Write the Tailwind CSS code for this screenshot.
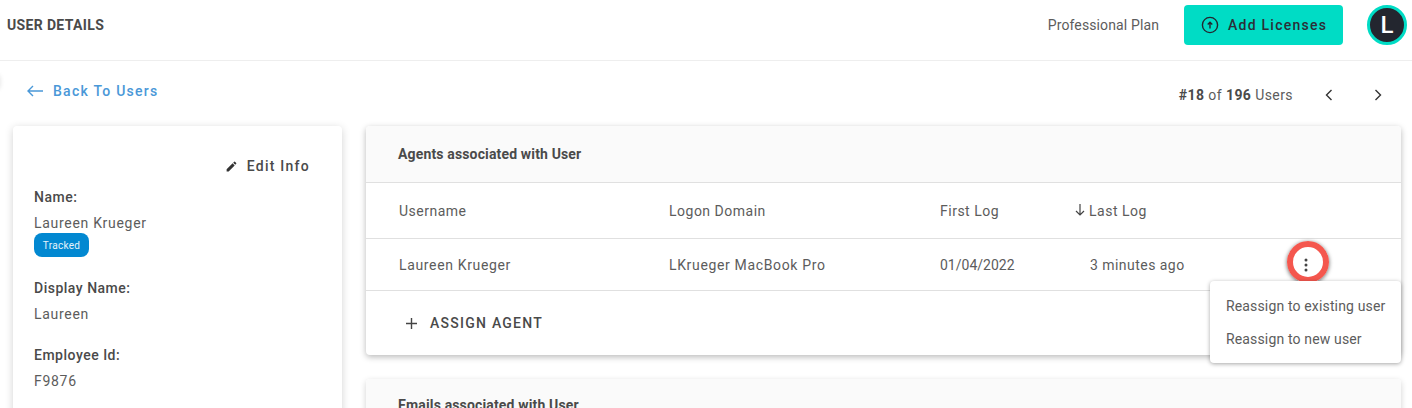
<!DOCTYPE html>
<html>
<head>
<meta charset="utf-8">
<script src="https://cdn.jsdelivr.net/npm/@tailwindcss/browser@4"></script>
</head>
<body class="bg-white overflow-hidden font-['Roboto',sans-serif] text-[#424242]">
<div class="relative w-[1412px] h-[408px] overflow-hidden">
  <!-- Top bar -->
  <div class="flex items-center h-[61px] border-b border-[#eeeeee] pb-[10px] pl-[7px] pr-[5px]">
    <h1 class="text-[14px] font-bold tracking-[0.35px] text-[#4a4a4a] grow">USER DETAILS</h1>
    <span class="text-[14px] tracking-[0.12px] text-[#5c5c5c] mr-[25px]">Professional Plan</span>
    <button class="flex items-center w-[159px] h-[40px] bg-[#00dcc5] rounded-[4px] pl-[17px] text-[14px] font-medium tracking-[1.25px] text-[#2b2e37] mr-[24px]">
      <svg class="w-[18px] h-[18px] mr-[9px]" viewBox="0 0 18 18" fill="none" stroke="#23262f" stroke-width="1.4"><circle cx="9" cy="9" r="7.6"/><path d="M9 12.5V6.5M6.7 8.6 9 6.3l2.3 2.3"/></svg>
      Add Licenses
    </button>
    <div class="flex items-center justify-center w-[40px] h-[40px] rounded-full bg-[#23262f] border-[3px] border-[#00dcc5] text-white text-[24px] font-medium">L</div>
  </div>

  <!-- Back link and pager -->
  <div class="flex items-center justify-between h-[56px] pl-[27px] pr-[29px]">
    <a class="flex items-center text-[14px] font-medium tracking-[1.25px] text-[#4a98d8] mt-[4px]">
      <svg class="w-[16px] h-[12px] mr-[10px]" viewBox="0 0 16 12" fill="none" stroke="#4a98d8" stroke-width="1.4"><path d="M16 6H1M6 1 1 6l5 5"/></svg>
      Back To Users
    </a>
    <div class="flex items-center text-[14px] tracking-[0.42px] text-[#5c5c5c] mt-[12px]">
      <span><b class="font-bold text-[#4a4a4a]">#18</b> of <b class="font-bold text-[#4a4a4a]">196</b> Users</span>
      <svg class="w-[10px] h-[12px] ml-[31px]" viewBox="0 0 10 12" fill="none" stroke="#333" stroke-width="1.4"><path d="M7.5 1 2.5 6l5 5"/></svg>
      <svg class="w-[10px] h-[12px] ml-[39px]" viewBox="0 0 10 12" fill="none" stroke="#333" stroke-width="1.4"><path d="M2.5 1l5 5-5 5"/></svg>
    </div>
  </div>

  <!-- faint edge of something cut off at the left of the page -->
  <div class="absolute -left-[10px] top-[74px] w-[10px] h-[16px] rounded-full shadow-[0_0_5px_rgba(0,0,0,0.12)]"></div>

  <div class="flex items-start pl-[13px] pt-[9px] gap-[24px]">
    <!-- User info card -->
    <div class="w-[329px] h-[400px] shrink-0 bg-white rounded-[4px] shadow-[0_2px_8px_rgba(0,0,0,0.18)] px-[21px] text-[14px] leading-[20px]">
      <div class="flex items-center justify-end pt-[30px] pr-[11px] font-medium tracking-[1.25px] text-[#4a4a4a]">
        <svg class="w-[13px] h-[13px] mr-[9px]" viewBox="0 0 24 24" fill="#333"><path d="M3 17.25V21h3.75L17.81 9.94l-3.75-3.75L3 17.25zM20.71 7.04a1 1 0 0 0 0-1.41l-2.34-2.34a1 1 0 0 0-1.41 0l-1.83 1.83 3.75 3.75 1.83-1.83z"/></svg>
        Edit Info
      </div>
      <div class="mt-[11px] font-medium tracking-[0.5px] text-[#4a4a4a]">Name:</div>
      <div class="mt-[6px] tracking-[0.7px] text-[#5c5c5c]">Laureen Krueger</div>
      <span class="flex items-center justify-center w-[55px] h-[24px] pt-[1px] rounded-[8px] bg-[#0288d1] text-white/90 text-[10px] tracking-[0.3px]">Tracked</span>
      <div class="mt-[21px] font-medium tracking-[0.5px] text-[#4a4a4a]">Display Name:</div>
      <div class="mt-[6px] tracking-[0.7px] text-[#5c5c5c]">Laureen</div>
      <div class="mt-[21px] font-medium tracking-[0.5px] text-[#4a4a4a]">Employee Id:</div>
      <div class="mt-[6px] tracking-[0.7px] text-[#5c5c5c]">F9876</div>
    </div>

    <div class="w-[1035px] shrink-0">
      <!-- Agents card -->
      <div class="bg-white rounded-[4px] shadow-[0_2px_6px_rgba(0,0,0,0.28)] text-[14px]">
        <div class="flex items-center h-[57px] pl-[32px] pt-[1px] border-b border-[#e0e0e0] bg-[#fafafa] rounded-t-[4px] font-bold tracking-[0.15px] text-[#4a4a4a]">Agents associated with User</div>
        <div class="flex items-center h-[56px] pl-[33px] pt-[2px] border-b border-[#e0e0e0] tracking-[0.5px] text-[#5c5c5c]">
          <span class="w-[270px]">Username</span>
          <span class="w-[271px]">Logon Domain</span>
          <span class="w-[135px]">First Log</span>
          <span class="flex items-center">
            <svg class="w-[10px] h-[14px] mr-[4px] -mt-[3px]" viewBox="0 0 10 14" fill="none" stroke="#444" stroke-width="1.2"><path d="M5 1v11M1 8l4 4 4-4"/></svg>
            Last Log
          </span>
        </div>
        <div class="flex items-center h-[52px] pl-[33px] pt-[2px] border-b border-[#e0e0e0] tracking-[0.65px] text-[#5c5c5c]">
          <span class="w-[270px]">Laureen Krueger</span>
          <span class="w-[271px]">LKrueger MacBook Pro</span>
          <span class="w-[150px] tracking-[0px]">01/04/2022</span>
          <span class="tracking-[0.46px]">3 minutes ago</span>
        </div>
        <div class="flex items-center h-[64px] pl-[39px] font-medium tracking-[1.25px] text-[#4a4a4a]">
          <svg class="w-[13px] h-[13px] mr-[12px]" viewBox="0 0 13 13" fill="none" stroke="#444" stroke-width="1.4"><path d="M6.5 1v11M1 6.5h11"/></svg>
          ASSIGN AGENT
        </div>
      </div>

      <!-- Emails card -->
      <div class="mt-[24px] bg-white rounded-[4px] shadow-[0_2px_6px_rgba(0,0,0,0.18)] text-[14px]">
        <div class="flex items-center h-[57px] pl-[32px] pb-[4px] bg-[#fafafa] rounded-t-[4px] font-bold tracking-[0.15px] text-[#4a4a4a]">Emails associated with User</div>
      </div>
    </div>
  </div>

  <!-- Highlight ring round the row menu button -->
  <div class="absolute left-[1287px] top-[241px] flex items-center justify-center w-[42px] h-[42px] rounded-full border-[6px] border-[#f4574e] shadow-[0_1px_4px_rgba(0,0,0,0.6)]">
    <svg class="w-[4px] h-[14px] mr-[4px] mt-[6px]" viewBox="0 0 4 14" fill="#444"><circle cx="2" cy="2" r="1.5"/><circle cx="2" cy="7" r="1.5"/><circle cx="2" cy="12" r="1.5"/></svg>
  </div>

  <!-- Row menu -->
  <div class="absolute left-[1210px] top-[281px] w-[191px] h-[82px] bg-white rounded-[4px] shadow-[0_1px_4px_rgba(0,0,0,0.35)] pl-[16px] pt-[9px] text-[14px] tracking-[0.15px] text-[#5c5c5c]">
    <div class="h-[33px] flex items-center">Reassign to existing user</div>
    <div class="h-[33px] flex items-center">Reassign to new user</div>
  </div>
</div>
</body>
</html>
